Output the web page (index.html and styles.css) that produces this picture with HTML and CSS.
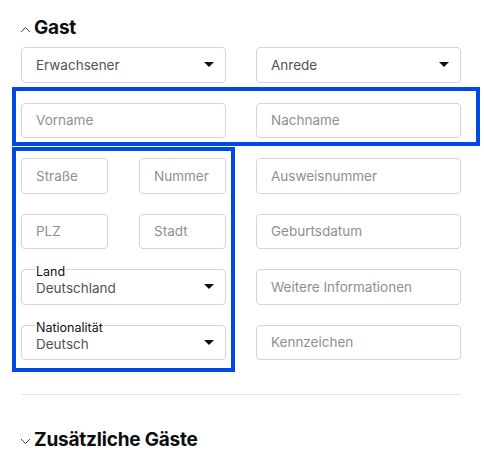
FILE: index.html
```html
<!DOCTYPE html>
<html lang="de">
<head>
<meta charset="utf-8">
<link rel="stylesheet" href="styles.css">
</head>
<body>
<div class="page">
  <h2 class="section-head">
    <svg class="chev" width="11" height="7" viewBox="0 0 11 7"><path d="M1 6 L5.5 1.5 L10 6" fill="none" stroke="#333" stroke-width="0.9"/></svg>
    <span>Gast</span>
  </h2>

  <div class="form">
    <div class="field select"><span class="value">Erwachsener</span><span class="caret"></span></div>
    <div class="field select"><span class="value">Anrede</span><span class="caret"></span></div>

    <div class="field"><span class="ph">Vorname</span></div>
    <div class="field"><span class="ph">Nachname</span></div>

    <div class="pair">
      <div class="field"><span class="ph">Straße</span></div>
      <div class="field"><span class="ph">Nummer</span></div>
    </div>
    <div class="field"><span class="ph">Ausweisnummer</span></div>

    <div class="pair">
      <div class="field"><span class="ph">PLZ</span></div>
      <div class="field"><span class="ph">Stadt</span></div>
    </div>
    <div class="field"><span class="ph">Geburtsdatum</span></div>

    <div class="field select labeled"><span class="label">Land</span><span class="value">Deutschland</span><span class="caret"></span></div>
    <div class="field"><span class="ph">Weitere Informationen</span></div>

    <div class="field select labeled"><span class="label">Nationalität</span><span class="value">Deutsch</span><span class="caret"></span></div>
    <div class="field"><span class="ph">Kennzeichen</span></div>

    <div class="hl hl-name"></div>
    <div class="hl hl-addr"></div>
  </div>

  <hr class="divider">

  <h2 class="section-head second">
    <svg class="chev" width="11" height="7" viewBox="0 0 11 7"><path d="M1 1 L5.5 5.5 L10 1" fill="none" stroke="#333" stroke-width="0.9"/></svg>
    <span>Zusätzliche Gäste</span>
  </h2>
</div>
</body>
</html>
```

FILE: styles.css
```css
* { box-sizing: border-box; }
html, body { margin: 0; padding: 0; background: #fff; }
body {
  font-family: Inter, "Noto Sans", "DejaVu Sans", sans-serif;
  color: #111;
}
.page {
  width: 484px;
  padding: 16px 23px 0 21px;
}
.section-head {
  margin: 0;
  display: flex;
  align-items: center;
  gap: 3px;
  font-size: 19px;
  line-height: 24px;
  font-weight: 700;
  letter-spacing: -0.2px;
  color: #0d0d0d;
}
.section-head .chev { margin-left: -1px; margin-top: 3px; }
.section-head.second { margin-top: 33px; }

.form {
  position: relative;
  margin-top: 7px;
  display: grid;
  grid-template-columns: 205px 205px;
  column-gap: 30px;
  row-gap: 20px;
  grid-auto-rows: 35.5px;
}
.pair {
  display: grid;
  grid-template-columns: 1fr 1fr;
  column-gap: 31px;
}
.field {
  position: relative;
  display: flex;
  align-items: center;
  padding: 0 11px 0 14px;
  border: 1px solid #d3d5db;
  border-radius: 4px;
  font-size: 13.5px;
  background: #fff;
}
.ph { color: #8f8f8f; }
.value { color: #525252; flex: 1; }
.caret {
  width: 0; height: 0;
  border-left: 5px solid transparent;
  border-right: 5px solid transparent;
  border-top: 5.5px solid #111;
}
.labeled .value { line-height: 14px; padding-top: 3px; }
.labeled .label {
  position: absolute;
  left: 13px;
  top: -4px;
  padding: 0 1px;
  background: #fff;
  font-size: 12.5px;
  line-height: 11px;
  color: #111;
}
.hl {
  position: absolute;
  border: 4px solid #0049e6;
  pointer-events: none;
}
.hl-name { left: -9px; top: 40px; width: 468px; height: 59px; }
.hl-addr { left: -9px; top: 100px; width: 223px; height: 225px; }

.divider {
  margin: 34px 0 0 0;
  border: 0;
  border-top: 1px solid #e4e4e7;
  width: 440px;
}
```
